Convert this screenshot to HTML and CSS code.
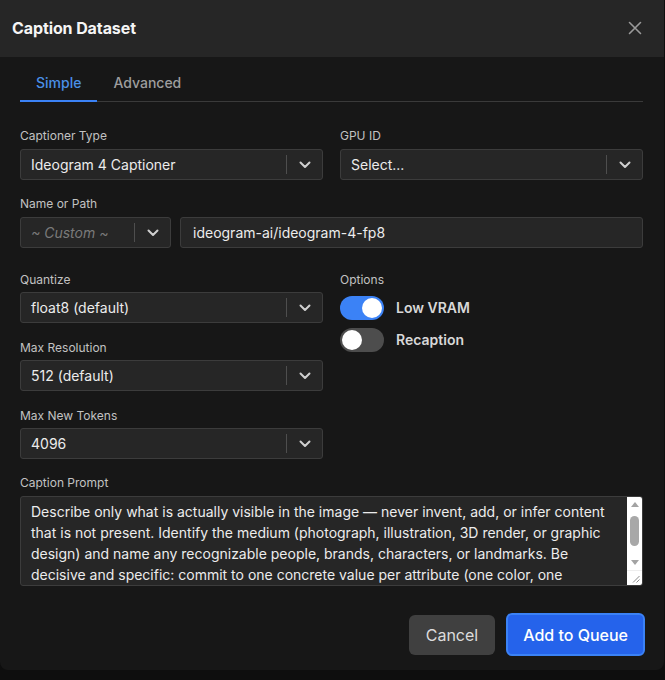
FILE: index.html
```html
<!DOCTYPE html>
<html>
<head>
<meta charset="utf-8">
<link rel="stylesheet" href="styles.css">
</head>
<body>
<div class="dialog">
  <div class="header">
    <h1 class="title">Caption Dataset</h1>
    <button class="close" aria-label="Close">
      <svg width="14" height="14" viewBox="0 0 14 14"><path d="M1.5 1.5 L12.5 12.5 M12.5 1.5 L1.5 12.5" stroke="#9a9a9a" stroke-width="1.6" stroke-linecap="round"/></svg>
    </button>
  </div>
  <div class="content">
    <div class="tabs">
      <div class="tab active">Simple</div>
      <div class="tab">Advanced</div>
    </div>

    <div class="grid2">
      <div class="field">
        <div class="label">Captioner Type</div>
        <div class="select"><span class="value">Ideogram 4 Captioner</span><span class="sep"></span><span class="chev"><svg width="12" height="8" viewBox="0 0 12 8"><path d="M1.5 1.5 L6 6 L10.5 1.5" fill="none" stroke="#cfcfcf" stroke-width="2" stroke-linecap="round" stroke-linejoin="round"/></svg></span></div>
      </div>
      <div class="field">
        <div class="label">GPU ID</div>
        <div class="select"><span class="value">Select...</span><span class="sep"></span><span class="chev"><svg width="12" height="8" viewBox="0 0 12 8"><path d="M1.5 1.5 L6 6 L10.5 1.5" fill="none" stroke="#cfcfcf" stroke-width="2" stroke-linecap="round" stroke-linejoin="round"/></svg></span></div>
      </div>
    </div>

    <div class="field path">
      <div class="label">Name or Path</div>
      <div class="path-row">
        <div class="select small"><span class="value placeholder">~ Custom ~</span><span class="sep"></span><span class="chev"><svg width="12" height="8" viewBox="0 0 12 8"><path d="M1.5 1.5 L6 6 L10.5 1.5" fill="none" stroke="#cfcfcf" stroke-width="2" stroke-linecap="round" stroke-linejoin="round"/></svg></span></div>
        <div class="input">ideogram-ai/ideogram-4-fp8</div>
      </div>
    </div>

    <div class="grid2 lower">
      <div class="col">
        <div class="field">
          <div class="label">Quantize</div>
          <div class="select"><span class="value">float8 (default)</span><span class="sep"></span><span class="chev"><svg width="12" height="8" viewBox="0 0 12 8"><path d="M1.5 1.5 L6 6 L10.5 1.5" fill="none" stroke="#cfcfcf" stroke-width="2" stroke-linecap="round" stroke-linejoin="round"/></svg></span></div>
        </div>
        <div class="field">
          <div class="label">Max Resolution</div>
          <div class="select"><span class="value">512 (default)</span><span class="sep"></span><span class="chev"><svg width="12" height="8" viewBox="0 0 12 8"><path d="M1.5 1.5 L6 6 L10.5 1.5" fill="none" stroke="#cfcfcf" stroke-width="2" stroke-linecap="round" stroke-linejoin="round"/></svg></span></div>
        </div>
        <div class="field">
          <div class="label">Max New Tokens</div>
          <div class="select"><span class="value">4096</span><span class="sep"></span><span class="chev"><svg width="12" height="8" viewBox="0 0 12 8"><path d="M1.5 1.5 L6 6 L10.5 1.5" fill="none" stroke="#cfcfcf" stroke-width="2" stroke-linecap="round" stroke-linejoin="round"/></svg></span></div>
        </div>
      </div>
      <div class="options">
        <div class="label">Options</div>
        <div class="toggles">
          <div class="toggle-row"><span class="switch on"><span class="knob"></span></span><span class="tlabel">Low VRAM</span></div>
          <div class="toggle-row"><span class="switch"><span class="knob"></span></span><span class="tlabel">Recaption</span></div>
        </div>
      </div>
    </div>

    <div class="field prompt">
      <div class="label">Caption Prompt</div>
      <div class="textbox">
        <textarea class="textarea">Describe only what is actually visible in the image — never invent, add, or infer content that is not present. Identify the medium (photograph, illustration, 3D render, or graphic design) and name any recognizable people, brands, characters, or landmarks. Be decisive and specific: commit to one concrete value per attribute (one color, one material, one count) rather than hedging between options. Describe composition, lighting, and any visible text exactly as written.</textarea>
        <div class="scrollbar">
          <div class="sb-btn"><span class="tri up"></span></div>
          <div class="sb-track"><div class="sb-thumb"></div></div>
          <div class="sb-btn"><span class="tri down"></span></div>
          <div class="sb-corner">
            <svg width="8" height="8" viewBox="0 0 8 8"><path d="M7.5 1 L1 7.5 M7.5 4.5 L4.5 7.5" stroke="#8a8a8a" stroke-width="1"/></svg>
          </div>
        </div>
      </div>
    </div>

    <div class="footer">
      <button class="btn cancel">Cancel</button>
      <button class="btn primary">Add to Queue</button>
    </div>
  </div>
</div>
</body>
</html>
```
FILE: styles.css
```css
* { box-sizing: border-box; }
html, body { margin: 0; padding: 0; }
body {
  background: #0e0e0e;
  font-family: Inter, "Noto Sans", sans-serif;
  color: #e5e5e5;
  width: 665px;
  height: 680px;
  overflow: hidden;
}
.dialog {
  width: 664px;
  height: 670px;
  background: #171717;
  border-radius: 0 0 8px 8px;
  overflow: hidden;
  display: flex;
  flex-direction: column;
}
.header {
  height: 57px;
  background: #262626;
  display: flex;
  align-items: center;
  justify-content: space-between;
  padding: 0 22px 1px 12px;
}
.title {
  margin: 0;
  font-size: 16px;
  font-weight: 700;
  color: #f5f5f5;
  letter-spacing: -0.1px;
}
.close {
  background: none;
  border: 0;
  padding: 0;
  width: 14px;
  height: 14px;
  display: flex;
}
.content {
  padding: 8px 21px 0 20px;
  display: flex;
  flex-direction: column;
}
.tabs {
  display: flex;
  border-bottom: 1px solid #3a3a3a;
  margin-bottom: 26px;
}
.tab {
  height: 37px;
  padding: 0 16px;
  display: flex;
  align-items: center;
  font-size: 14px;
  font-weight: 500;
  color: #9e9e9e;
  border-bottom: 2px solid transparent;
  margin-bottom: -1px;
}
.tab.active {
  color: #4a8fe7;
  border-bottom-color: #3b82f6;
}
.grid2 {
  display: grid;
  grid-template-columns: 303px 303px;
  column-gap: 17px;
}
.field { display: flex; flex-direction: column; }
.label {
  font-size: 12px;
  line-height: 16px;
  color: #c2c2c2;
  margin-bottom: 5px;
}
.select, .input {
  height: 31px;
  background: #262626;
  border: 1px solid #3c3c3c;
  border-radius: 3px;
  display: flex;
  align-items: center;
  font-size: 14px;
  color: #ececec;
}
.select .value { flex: 1; padding-left: 10px; white-space: nowrap; }
.select .placeholder { color: #7a7a7a; font-style: italic; }
.sep { width: 1px; height: 19px; background: #4e4e4e; }
.chev { width: 35px; display: flex; justify-content: center; align-items: center; padding-top: 1px; }
.path { margin-top: 16px; }
.path-row { display: flex; gap: 9px; }
.select.small { width: 151px; }
.input { flex: 1; padding-left: 12px; }
.lower { margin-top: 24px; }
.col { display: flex; flex-direction: column; gap: 17px; }
.col .label { margin-bottom: 4px; }
.options { display: flex; flex-direction: column; }
.options .label { margin-bottom: 8px; }
.toggles { display: flex; flex-direction: column; gap: 8px; }
.toggle-row { display: flex; align-items: center; gap: 12px; height: 24px; }
.switch {
  width: 44px;
  height: 24px;
  border-radius: 12px;
  background: #4d4d4d;
  padding: 2px;
  display: flex;
  justify-content: flex-start;
}
.switch.on { background: #3b82f6; justify-content: flex-end; }
.knob { width: 20px; height: 20px; border-radius: 50%; background: #fff; }
.tlabel { font-size: 14px; line-height: 20px; font-weight: 600; color: #d8d8d8; }
.prompt { margin-top: 16px; }
.textbox {
  height: 90px;
  background: #262626;
  border: 1px solid #3c3c3c;
  border-radius: 3px;
  display: flex;
  overflow: hidden;
}
.textarea {
  flex: 1 1 0;
  min-width: 0;
  width: 100%;
  background: transparent;
  border: 0;
  outline: none;
  color: #ececec;
  font-family: Inter, "Noto Sans", sans-serif;
  font-size: 14px;
  line-height: 21px;
  padding: 4px 4px 4px 10px;
  resize: none;
  overflow: hidden;
}
.scrollbar {
  width: 15px;
  flex: none;
  background: #ffffff;
  display: flex;
  flex-direction: column;
}
.sb-btn {
  height: 15px;
  display: flex;
  align-items: center;
  justify-content: center;
}
.tri { width: 0; height: 0; border-left: 4px solid transparent; border-right: 4px solid transparent; }
.tri.up { border-bottom: 5px solid #a3a3a3; }
.tri.down { border-top: 5px solid #a3a3a3; }
.sb-track { flex: 1; padding: 4px 3px 9px; display: flex; }
.sb-thumb { flex: 1; background: #a8a8a8; border-radius: 5px; }
.sb-corner {
  height: 15px;
  display: flex;
  align-items: flex-end;
  justify-content: flex-end;
  padding: 0 2px 2px 0;
  border-top: 1px solid #eeeeee;
}
.footer {
  display: flex;
  justify-content: flex-end;
  align-items: center;
  gap: 11px;
  margin-top: 27px;
  margin-right: -2px;
}
.btn {
  font-family: Inter, "Noto Sans", sans-serif;
  font-size: 16px;
  border-radius: 6px;
  cursor: pointer;
}
.cancel {
  height: 40px;
  padding: 0 17px;
  background: #404040;
  border: 0;
  color: #dcdcdc;
}
.primary {
  height: 43px;
  padding: 0 15px;
  background: #2563eb;
  border: 2px solid #3b82f6;
  color: #fff;
  font-weight: 500;
}
```
